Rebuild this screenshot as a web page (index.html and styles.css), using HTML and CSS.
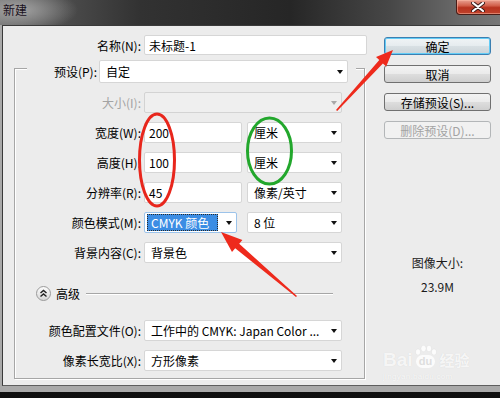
FILE: index.html
```html
<!DOCTYPE html>
<html lang="zh-CN">
<head>
<meta charset="utf-8">
<title>新建</title>
<link rel="stylesheet" href="styles.css">
</head>
<body>
<div class="window">
  <div class="titlebar">
    <span class="title">新建</span>
    <div class="close">
      <svg width="14" height="10" viewBox="0 0 14 10"><path d="M2 1 L12 9 M12 1 L2 9" stroke="#3a1a1a" stroke-width="4" stroke-linecap="round"/><path d="M2 1 L12 9 M12 1 L2 9" stroke="#fff" stroke-width="2.2" stroke-linecap="round"/></svg>
    </div>
  </div>
  <div class="client">
    <div class="left">
      <div class="name-row">
        <label>名称(N):</label>
        <div class="field">未标题-1</div>
      </div>
      <div class="group">
        <div class="preset-row">
          <label>预设(P):</label>
          <div class="field select">自定</div>
        </div>
        <div class="form-row">
          <label class="disabled">大小(I):</label>
          <div class="field select off"></div>
        </div>
        <div class="form-row">
          <label>宽度(W):</label>
          <div class="pair"><div class="field w98">200</div><div class="field select w95">厘米</div></div>
        </div>
        <div class="form-row">
          <label>高度(H):</label>
          <div class="pair"><div class="field w98">100</div><div class="field select w95">厘米</div></div>
        </div>
        <div class="form-row">
          <label>分辨率(R):</label>
          <div class="pair"><div class="field w98">45</div><div class="field select w95">像素/英寸</div></div>
        </div>
        <div class="form-row">
          <label>颜色模式(M):</label>
          <div class="pair"><div class="field select focus w93"><span class="hl">CMYK 颜色</span></div><div class="field select w95">8 位</div></div>
        </div>
        <div class="form-row">
          <label>背景内容(C):</label>
          <div class="field select">背景色</div>
        </div>
        <div class="adv-row">
          <svg class="adv-icon" width="15" height="15" viewBox="0 0 15 15">
            <defs><linearGradient id="ag" x1="0" y1="0" x2="0" y2="1"><stop offset="0" stop-color="#fdfdfd"/><stop offset="1" stop-color="#d6d6d6"/></linearGradient></defs>
            <circle cx="7.5" cy="7.5" r="7" fill="url(#ag)" stroke="#9a9a9a"/>
            <path d="M4.5 7 L7.5 4.5 L10.5 7 M4.5 10.5 L7.5 8 L10.5 10.5" fill="none" stroke="#222" stroke-width="1.5"/>
          </svg>
          <span class="adv-text">高级</span>
          <div class="adv-line"></div>
        </div>
        <div class="form-row first-after-adv">
          <label>颜色配置文件(O):</label>
          <div class="field select">工作中的 CMYK: Japan Color ...</div>
        </div>
        <div class="form-row">
          <label>像素长宽比(X):</label>
          <div class="field select">方形像素</div>
        </div>
      </div>
    </div>
    <div class="right">
      <div class="btn default">确定</div>
      <div class="btn">取消</div>
      <div class="btn">存储预设(S)...</div>
      <div class="btn disabled">删除预设(D)...</div>
      <div class="size-label">图像大小:</div>
      <div class="size-value">23.9M</div>
    </div>
  </div>
</div>

<div class="watermark">
  <div class="wm-top">
    <span class="wm-bai">Bai</span>
    <span class="wm-paw">
      <svg width="24" height="10" viewBox="0 0 24 10"><g fill="rgba(255,255,255,0.85)" stroke="rgba(0,0,0,0.08)" stroke-width="0.6"><ellipse cx="4" cy="7" rx="2.5" ry="3"/><ellipse cx="9.5" cy="3.5" rx="2.5" ry="3.2"/><ellipse cx="15" cy="3.5" rx="2.5" ry="3.2"/><ellipse cx="20" cy="7" rx="2.5" ry="3"/></g></svg>
      <span class="wm-du">du</span>
    </span>
    <span class="wm-jy">经验</span>
  </div>
  <div class="wm-url">jingyan.baidu.com</div>
</div>

<svg class="annot" width="500" height="398" viewBox="0 0 500 398">
  <ellipse cx="157" cy="160" rx="17.5" ry="46" fill="none" stroke="#e8261c" stroke-width="3"/>
  <ellipse cx="269.5" cy="151" rx="22" ry="33" fill="none" stroke="#22a72c" stroke-width="3"/>
  <polygon points="336,110 379.3,60.0 376.0,56.9 393,50 386.2,66.5 382.9,63.4 337.2,111" fill="#ee2a1c"/>
  <polygon points="296,297 235.2,248.3 232,252.1 221,232 242.4,239.9 239.2,243.7 297,296" fill="#ee2a1c"/>
</svg>
</body>
</html>
```
FILE: styles.css
```css
* { box-sizing: border-box; }
html, body { margin: 0; padding: 0; }
body {
  width: 500px;
  height: 398px;
  overflow: hidden;
  position: relative;
  background: linear-gradient(#2a2a2a, #0e0e0e);
  font-family: "Noto Sans CJK SC", "Noto Sans", sans-serif;
  font-size: 12px;
  color: #000;
}
.window {
  height: 392px;
  background: #a9a9a9;
  display: flex;
  flex-direction: column;
}
.titlebar {
  height: 25px;
  flex: none;
  position: relative;
  background:
    radial-gradient(ellipse 60px 22px at 18px 10px, rgba(170,170,170,0.9), rgba(170,170,170,0) 100%),
    linear-gradient(90deg, #6e6e6e 0, #4a4a4a 70px, #323232 140px, #262626 290px, #474747 390px, #6a6a6a 460px, #777 500px);
}
.title {
  position: absolute;
  left: 3px;
  top: 2px;
  font-size: 12px;
  line-height: 16px;
  color: #1a1020;
}
.close {
  position: absolute;
  left: 456px;
  top: 0;
  width: 60px;
  height: 15px;
  border: 1px solid #4a1c16;
  border-top: none;
  border-radius: 0 0 4px 4px;
  background: linear-gradient(#e9a092 0, #d2604c 40%, #b7321f 55%, #c0432c 100%);
  box-shadow: inset 0 0 0 1px rgba(255,190,170,0.5);
  display: flex;
  justify-content: flex-start;
  align-items: center;
  padding-left: 14px;
}
.client {
  height: 361px;
  flex: none;
  margin-left: 2px;
  border-left: 1px solid #3a3a3a;
  border-top: 1px solid #3a3a3a;
  border-bottom: 1px solid #5e5e5e;
  background: #ececec;
  display: flex;
}
.left {
  width: 381px;
  flex: none;
  padding: 9px 0 0 11px;
}
label {
  text-align: right;
  white-space: nowrap;
  display: flex;
  align-items: center;
  justify-content: flex-end;
}
label.disabled { color: #a3a3a3; }
.name-row {
  display: grid;
  grid-template-columns: 127px 223px;
  column-gap: 3px;
  height: 20px;
}
.group {
  margin-top: 13px;
  width: 351px;
  border: 1px solid #a6a6a6;
  box-shadow: inset 1px 1px 0 #fff, 1px 1px 0 #fff;
  padding-bottom: 7px;
}
.preset-row {
  margin: -9px 8px 0 12px;
  height: 23px;
  background: #ececec;
  display: grid;
  grid-template-columns: 70px 249px;
  column-gap: 2px;
  padding-right: 7px;
  position: relative;
}
.form-row {
  display: grid;
  grid-template-columns: 126px 198px;
  column-gap: 3px;
  height: 21px;
  margin-top: 9px;
}
.first-after-adv { margin-top: 19px; }
.pair {
  display: flex;
  justify-content: space-between;
}
.field {
  background: #fff;
  border: 1px solid #d6d6d6;
  border-radius: 2px;
  display: flex;
  align-items: center;
  padding-left: 4px;
  white-space: nowrap;
  overflow: hidden;
  height: 100%;
}
.select { padding-left: 6px; }
.select::after {
  content: "";
  flex: none;
  margin-left: auto;
  margin-right: 4px;
  width: 0;
  height: 0;
  border-top: 4px solid #111;
  border-left: 3.5px solid transparent;
  border-right: 3.5px solid transparent;
}
.select.off {
  background: #efefef;
  border-color: #d3d3d3;
}
.select.off::after { border-top-color: #a8a8a8; }
.select.focus {
  border-color: #9cc3ea;
  padding-left: 2px;
}
.hl {
  width: 71px;
  height: 17px;
  background: #3b8de4;
  color: #fff;
  outline: 1px dotted #2a2a2a;
  outline-offset: -1px;
  display: flex;
  align-items: center;
  padding-left: 4px;
}
.w98 { width: 98px; }
.w95 { width: 95px; }
.w93 { width: 93px; }
.adv-row {
  display: flex;
  align-items: center;
  height: 15px;
  margin-top: 23px;
  padding-left: 21px;
  padding-right: 31px;
}
.adv-icon { flex: none; display: block; }
.adv-text { margin-left: 5px; line-height: 15px; }
.adv-line {
  flex: 1;
  margin-left: 6px;
  height: 2px;
  border-top: 1px solid #a6a6a6;
  border-bottom: 1px solid #fff;
}
.right {
  width: 107px;
  flex: none;
  padding-top: 11px;
  display: flex;
  flex-direction: column;
  align-items: stretch;
}
.btn {
  height: 18px;
  margin-bottom: 10px;
  border: 1px solid #707070;
  border-radius: 3px;
  background: linear-gradient(#f3f3f3 0, #ebebeb 48%, #dddddd 52%, #cfcfcf 100%);
  display: flex;
  align-items: center;
  justify-content: center;
  white-space: nowrap;
}
.btn.default {
  border-color: #3c7fb1;
  box-shadow: inset 0 0 0 1px #63ccf6;
  background: linear-gradient(#f0f4f6 0, #e6ecef 48%, #d8e0e4 52%, #cbd3d8 100%);
}
.btn.disabled {
  border-color: #b3b6b8;
  background: #f1f1f1;
  color: #a3a3a3;
}
.size-label {
  margin-top: 106px;
  line-height: 16px;
  text-align: center;
  color: #1a1a1a;
}
.size-value {
  margin-top: 8px;
  line-height: 16px;
  text-align: center;
  color: #1a1a1a;
}
.watermark {
  position: absolute;
  left: 383px;
  top: 342px;
  width: 92px;
  color: rgba(255,255,255,0.8);
  text-shadow: 0 0 1px rgba(0,0,0,0.1);
  font-family: "Liberation Sans", Arial, sans-serif;
}
.wm-top { display: flex; align-items: flex-end; height: 28px; }
.wm-bai { font-size: 19px; font-weight: bold; line-height: 20px; }
.wm-paw {
  display: flex;
  flex-direction: column;
  align-items: center;
  margin-left: 1px;
}
.wm-paw svg { display: block; }
.wm-du {
  font-size: 11px;
  font-weight: bold;
  line-height: 13px;
  padding: 0 3px;
  border-radius: 7px;
  background: rgba(255,255,255,0.8);
  color: #dedede;
  text-shadow: none;
  margin-bottom: 2px;
}
.wm-jy {
  font-family: "Noto Sans CJK SC", sans-serif;
  font-size: 15px;
  font-weight: bold;
  line-height: 20px;
  margin-left: 2px;
}
.wm-url { font-size: 8px; line-height: 12px; margin-top: 1px; letter-spacing: 0.3px; }
.annot {
  position: absolute;
  left: 0;
  top: 0;
  pointer-events: none;
}
```
